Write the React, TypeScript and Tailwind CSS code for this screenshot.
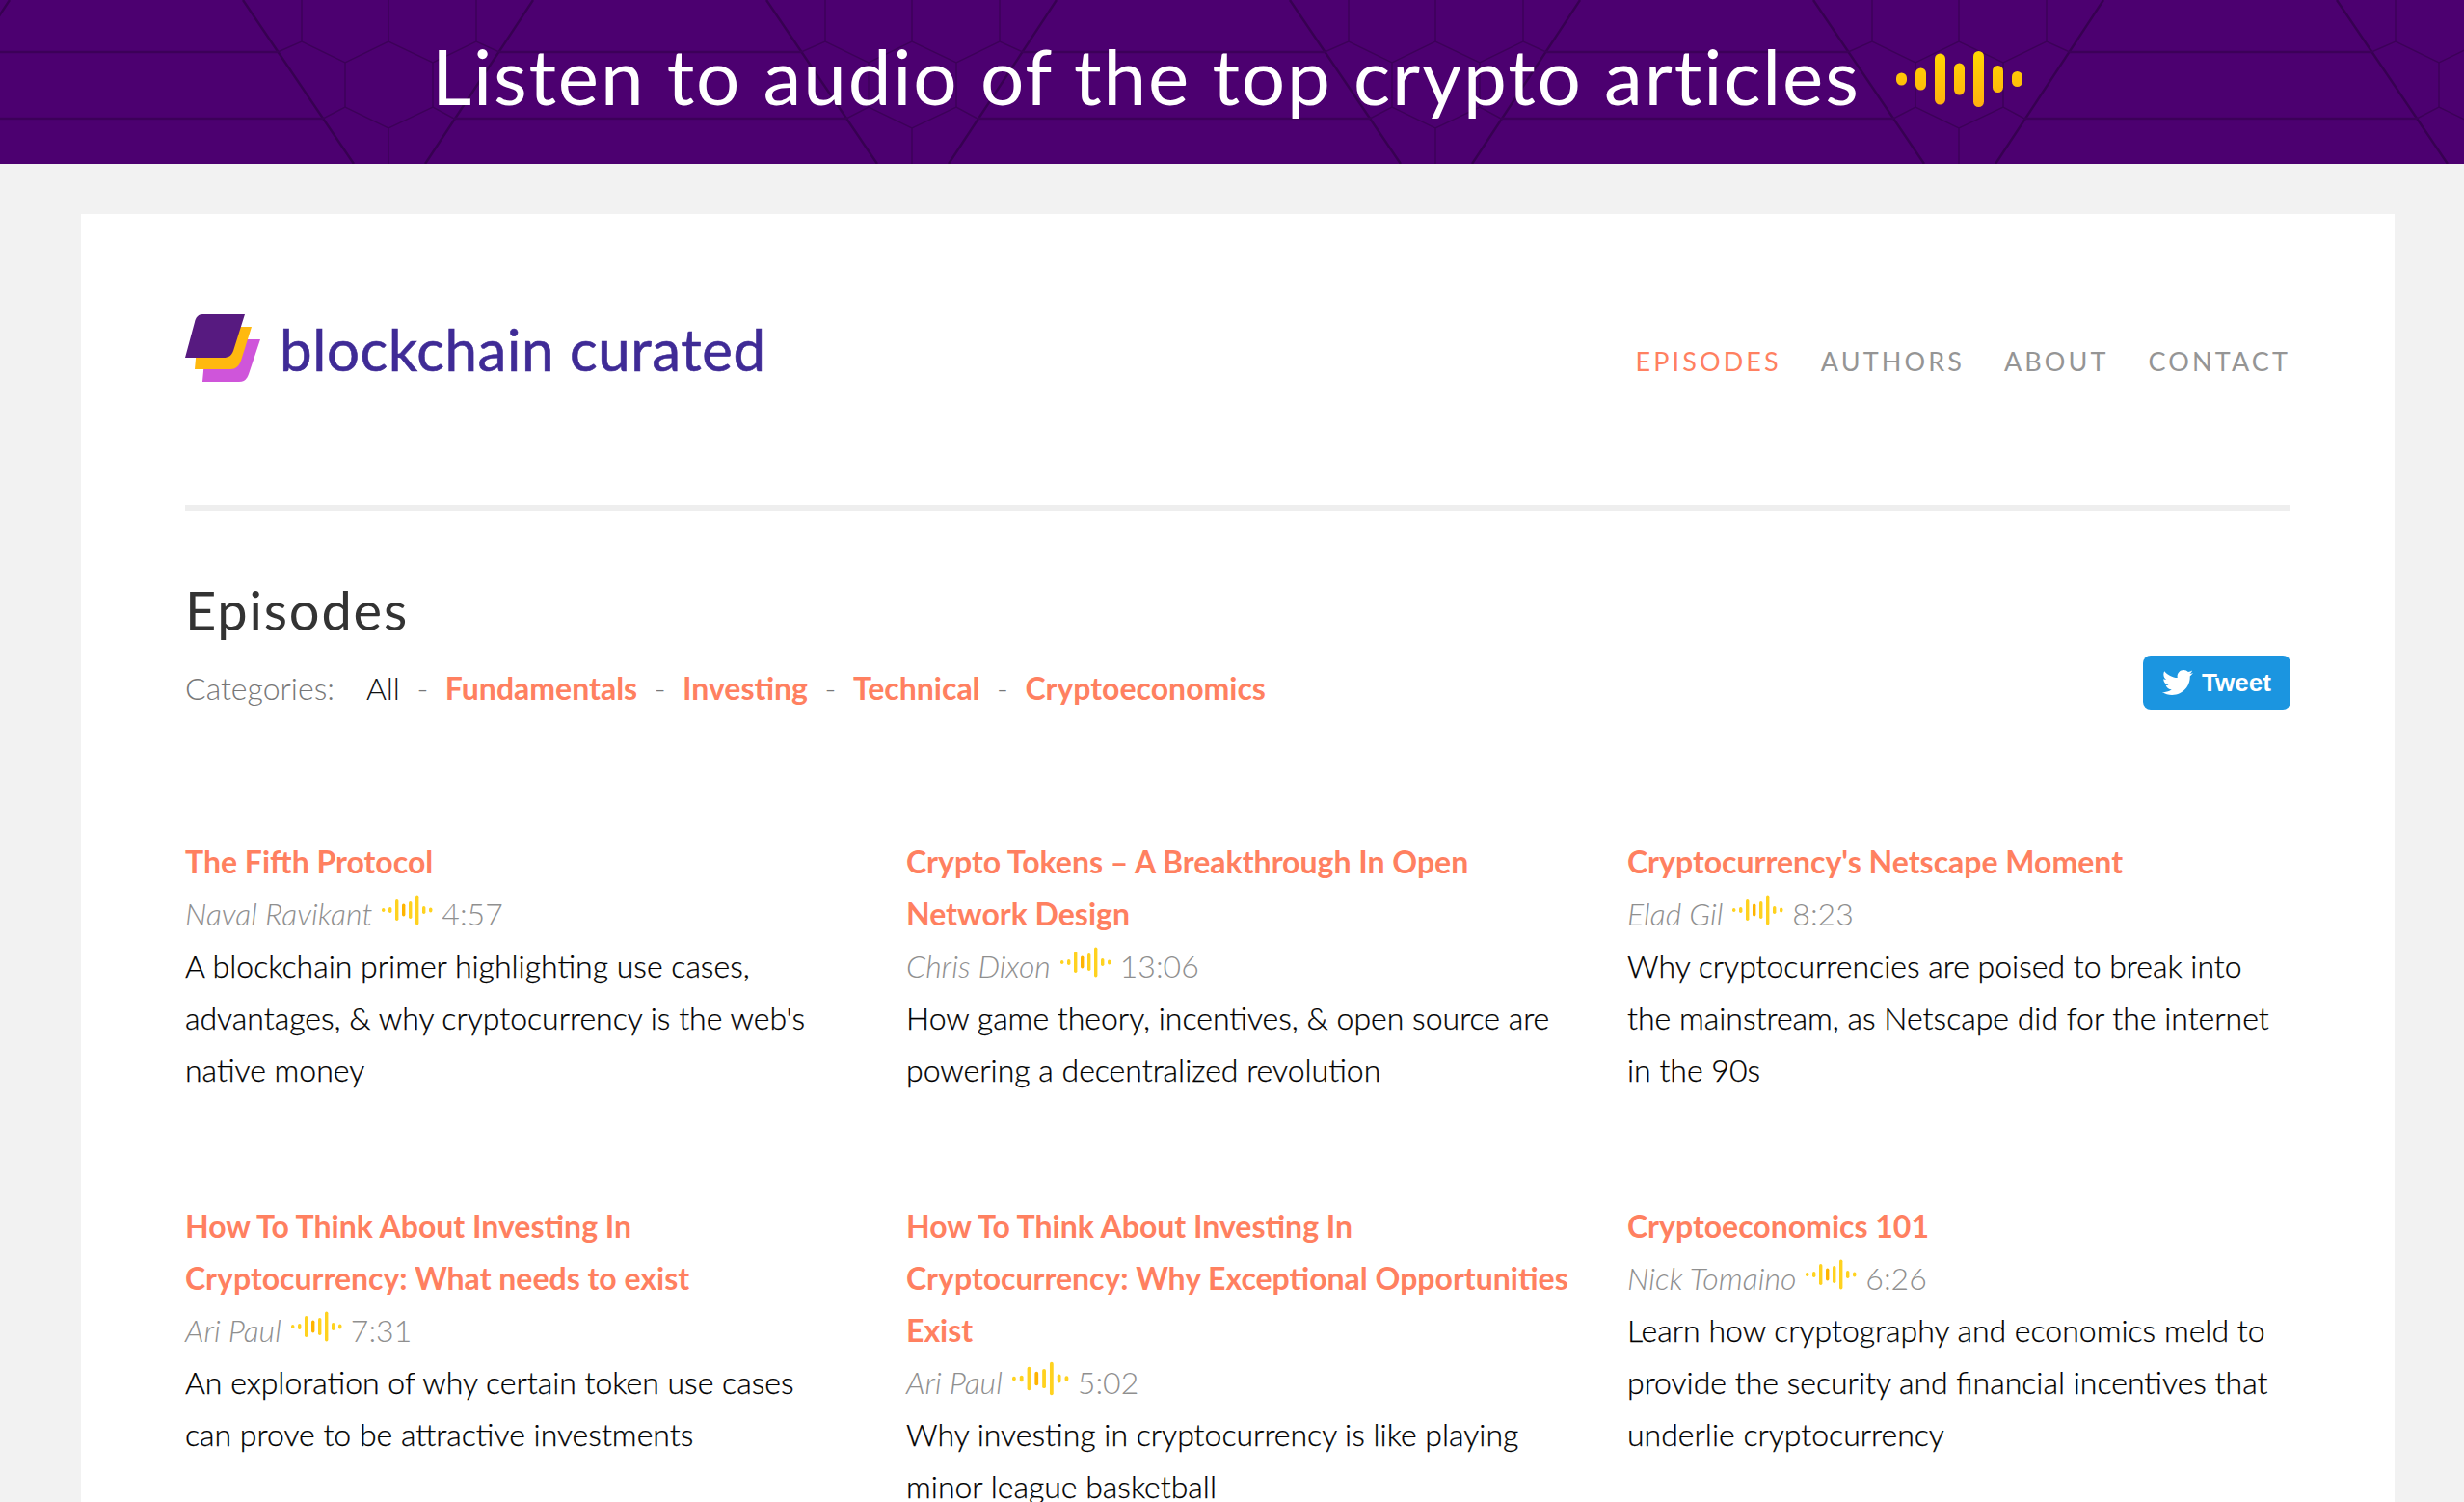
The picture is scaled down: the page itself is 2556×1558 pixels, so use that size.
import React from "react";
import { FaTwitter } from "react-icons/fa";

type Episode = {
  title: string;
  author: string;
  time: string;
  desc: string;
  bigWave?: boolean;
};

const episodes: Episode[] = [
  {
    title: "The Fifth Protocol",
    author: "Naval Ravikant",
    time: "4:57",
    desc: "A blockchain primer highlighting use cases, advantages, & why cryptocurrency is the web's native money",
  },
  {
    title: "Crypto Tokens – A Breakthrough In Open Network Design",
    author: "Chris Dixon",
    time: "13:06",
    desc: "How game theory, incentives, & open source are powering a decentralized revolution",
  },
  {
    title: "Cryptocurrency's Netscape Moment",
    author: "Elad Gil",
    time: "8:23",
    desc: "Why cryptocurrencies are poised to break into the mainstream, as Netscape did for the internet in the 90s",
  },
  {
    title: "How To Think About Investing In Cryptocurrency: What needs to exist",
    author: "Ari Paul",
    time: "7:31",
    desc: "An exploration of why certain token use cases can prove to be attractive investments",
  },
  {
    title: "How To Think About Investing In Cryptocurrency: Why Exceptional Opportunities Exist",
    author: "Ari Paul",
    time: "5:02",
    desc: "Why investing in cryptocurrency is like playing minor league basketball",
    bigWave: true,
  },
  {
    title: "Cryptoeconomics 101",
    author: "Nick Tomaino",
    time: "6:26",
    desc: "Learn how cryptography and economics meld to provide the security and financial incentives that underlie cryptocurrency",
  },
];

const categories = ["Fundamentals", "Investing", "Technical", "Cryptoeconomics"];

function BannerPattern() {
  return (
    <svg className="absolute inset-0 w-full h-full" aria-hidden="true">
      <defs>
        <pattern id="tile" x="0" y="0" width="543" height="170" patternUnits="userSpaceOnUse">
          <g fill="none" stroke="#3c0059" strokeWidth="1.5">
            <path d="M252 0L367 170M553 0L441 170M10 0L-102 170M795 0L910 170" stroke="#370052" strokeWidth="2.5" />
            <path d="M0 54H288M518 54H543M0 123H335M471 123H543" strokeWidth="2.5" />
            <path d="M313 0V43M403 0V43M494 0V43" />
            <path d="M288 54L313 43L358 65L403 43L449 65L494 43L518 54" />
            <path d="M358 65V111M449 65V111" />
            <path d="M335 123L358 111L403 133L449 111L471 123M403 133V170" />
          </g>
        </pattern>
      </defs>
      <rect width="100%" height="170" fill="url(#tile)" />
    </svg>
  );
}

function BannerWave() {
  const bars = [
    [0, 13],
    [20, 23],
    [40, 53],
    [60, 33],
    [80, 58],
    [100, 28],
    [120, 16],
  ];
  return (
    <svg width="131" height="60" viewBox="0 0 131 60" className="shrink-0">
      <defs>
        <linearGradient id="waveFill" gradientUnits="userSpaceOnUse" x1="0" y1="0" x2="0" y2="60">
          <stop offset="0" stopColor="#ffd800" />
          <stop offset="1" stopColor="#ffaf0f" />
        </linearGradient>
      </defs>
      {bars.map(([x, h]) => (
        <rect key={x} x={x} y={30 - h / 2} width="11" height={h} rx="5.5" fill="url(#waveFill)" />
      ))}
    </svg>
  );
}

function SmallWave({ big }: { big?: boolean }) {
  const bars = [
    [0, 4],
    [7, 6],
    [14, 22],
    [21, 13],
    [28, 18],
    [35, 31],
    [42, 8],
    [49, 5],
  ];
  return (
    <svg
      width={big ? 59 : 53}
      height={big ? 36 : 32}
      viewBox="0 0 53 32"
      className="shrink-0 mb-[8px]"
    >
      {bars.map(([x, h]) => (
        <rect key={x} x={x} y={16 - h / 2} width="3.4" height={h} rx="1.7" fill={x === 21 ? "#ffb400" : "#ffd21f"} />
      ))}
    </svg>
  );
}

function Logo() {
  return (
    <div className="flex items-center gap-[18px]">
      <svg width="80" height="72" viewBox="0 0 80 72" className="shrink-0">
        <path d="M22 26H78L66 62C64 67 62 70 56 70H18Z" fill="#cf55da" />
        <path d="M14 13H69L58 48C56 54 52 57 47 57H10Z" fill="#ffb90f" />
        <path d="M18 0H62L50 38C48 43 45 45 40 45H0L10 8C11 3 14 0 18 0Z" fill="#571a80" />
      </svg>
      <span className="text-[60px] leading-none text-[#3f2b96] tracking-[0.6px] [-webkit-text-stroke:0.6px_#3f2b96]">
        blockchain curated
      </span>
    </div>
  );
}

export default function App() {
  return (
    <div className="h-[1558px] overflow-hidden bg-[#f2f2f2] font-['Lato',sans-serif]">
      <div className="relative h-[170px] bg-[#4c0070] flex items-center pl-[448px] gap-[37px]">
        <BannerPattern />
        <span className="relative -mt-[14px] text-[80px] leading-none text-white font-normal tracking-[1.85px] whitespace-nowrap">
          Listen to audio of the top crypto articles
        </span>
        <div className="relative -mt-[6px]">
          <BannerWave />
        </div>
      </div>

      <div className="ml-[84px] mr-[72px] mt-[52px] bg-white px-[108px] h-[1400px]">
        <div className="flex justify-between items-start pt-[104px] h-[308px] border-b-[6px] border-[#eeeeee]">
          <Logo />
          <nav className="flex gap-[41px] pt-[35px] text-[27px] leading-none tracking-[3.1px] text-[#959595] uppercase">
            <a className="text-[#ff8060]">Episodes</a>
            <a>Authors</a>
            <a>About</a>
            <a>Contact</a>
          </nav>
        </div>

        <h1 className="mt-[68px] text-[56px] leading-[70px] text-[#333333] tracking-[1.8px]">Episodes</h1>

        <div className="mt-[19px] flex justify-between items-start">
          <div className="flex items-center text-[32px] leading-[54px] font-light text-[#777777]">
            <span className="mr-[33px]">Categories:</span>
            <span className="text-[#111111]">All</span>
            {categories.map((c) => (
              <React.Fragment key={c}>
                <span className="mx-[17.5px]">-</span>
                <a className="font-bold text-[#ff8060]">{c}</a>
              </React.Fragment>
            ))}
          </div>
          <button className="w-[153px] h-[56px] -mt-[7px] rounded-[8px] bg-[#1b95e0] text-white flex items-center justify-center gap-[9px] font-['Liberation_Sans',sans-serif] font-bold text-[26px]">
            <FaTwitter className="w-[32px] h-[32px]" />
            Tweet
          </button>
        </div>

        <div className="mt-[126px] grid grid-cols-3 gap-x-[60px] gap-y-[108px] text-[32px] leading-[54px]">
          {episodes.map((ep) => (
            <div key={ep.title}>
              <a className="block font-bold text-[#ff8060]">{ep.title}</a>
              <div className="flex items-center text-[#8f8f8f] font-light">
                <span className="italic mr-[10px]">{ep.author}</span>
                <SmallWave big={ep.bigWave} />
                <span className="ml-[9px]">{ep.time}</span>
              </div>
              <p className="font-light text-[#000000] [-webkit-text-stroke:0.25px_#000000]">{ep.desc}</p>
            </div>
          ))}
        </div>
      </div>
    </div>
  );
}
